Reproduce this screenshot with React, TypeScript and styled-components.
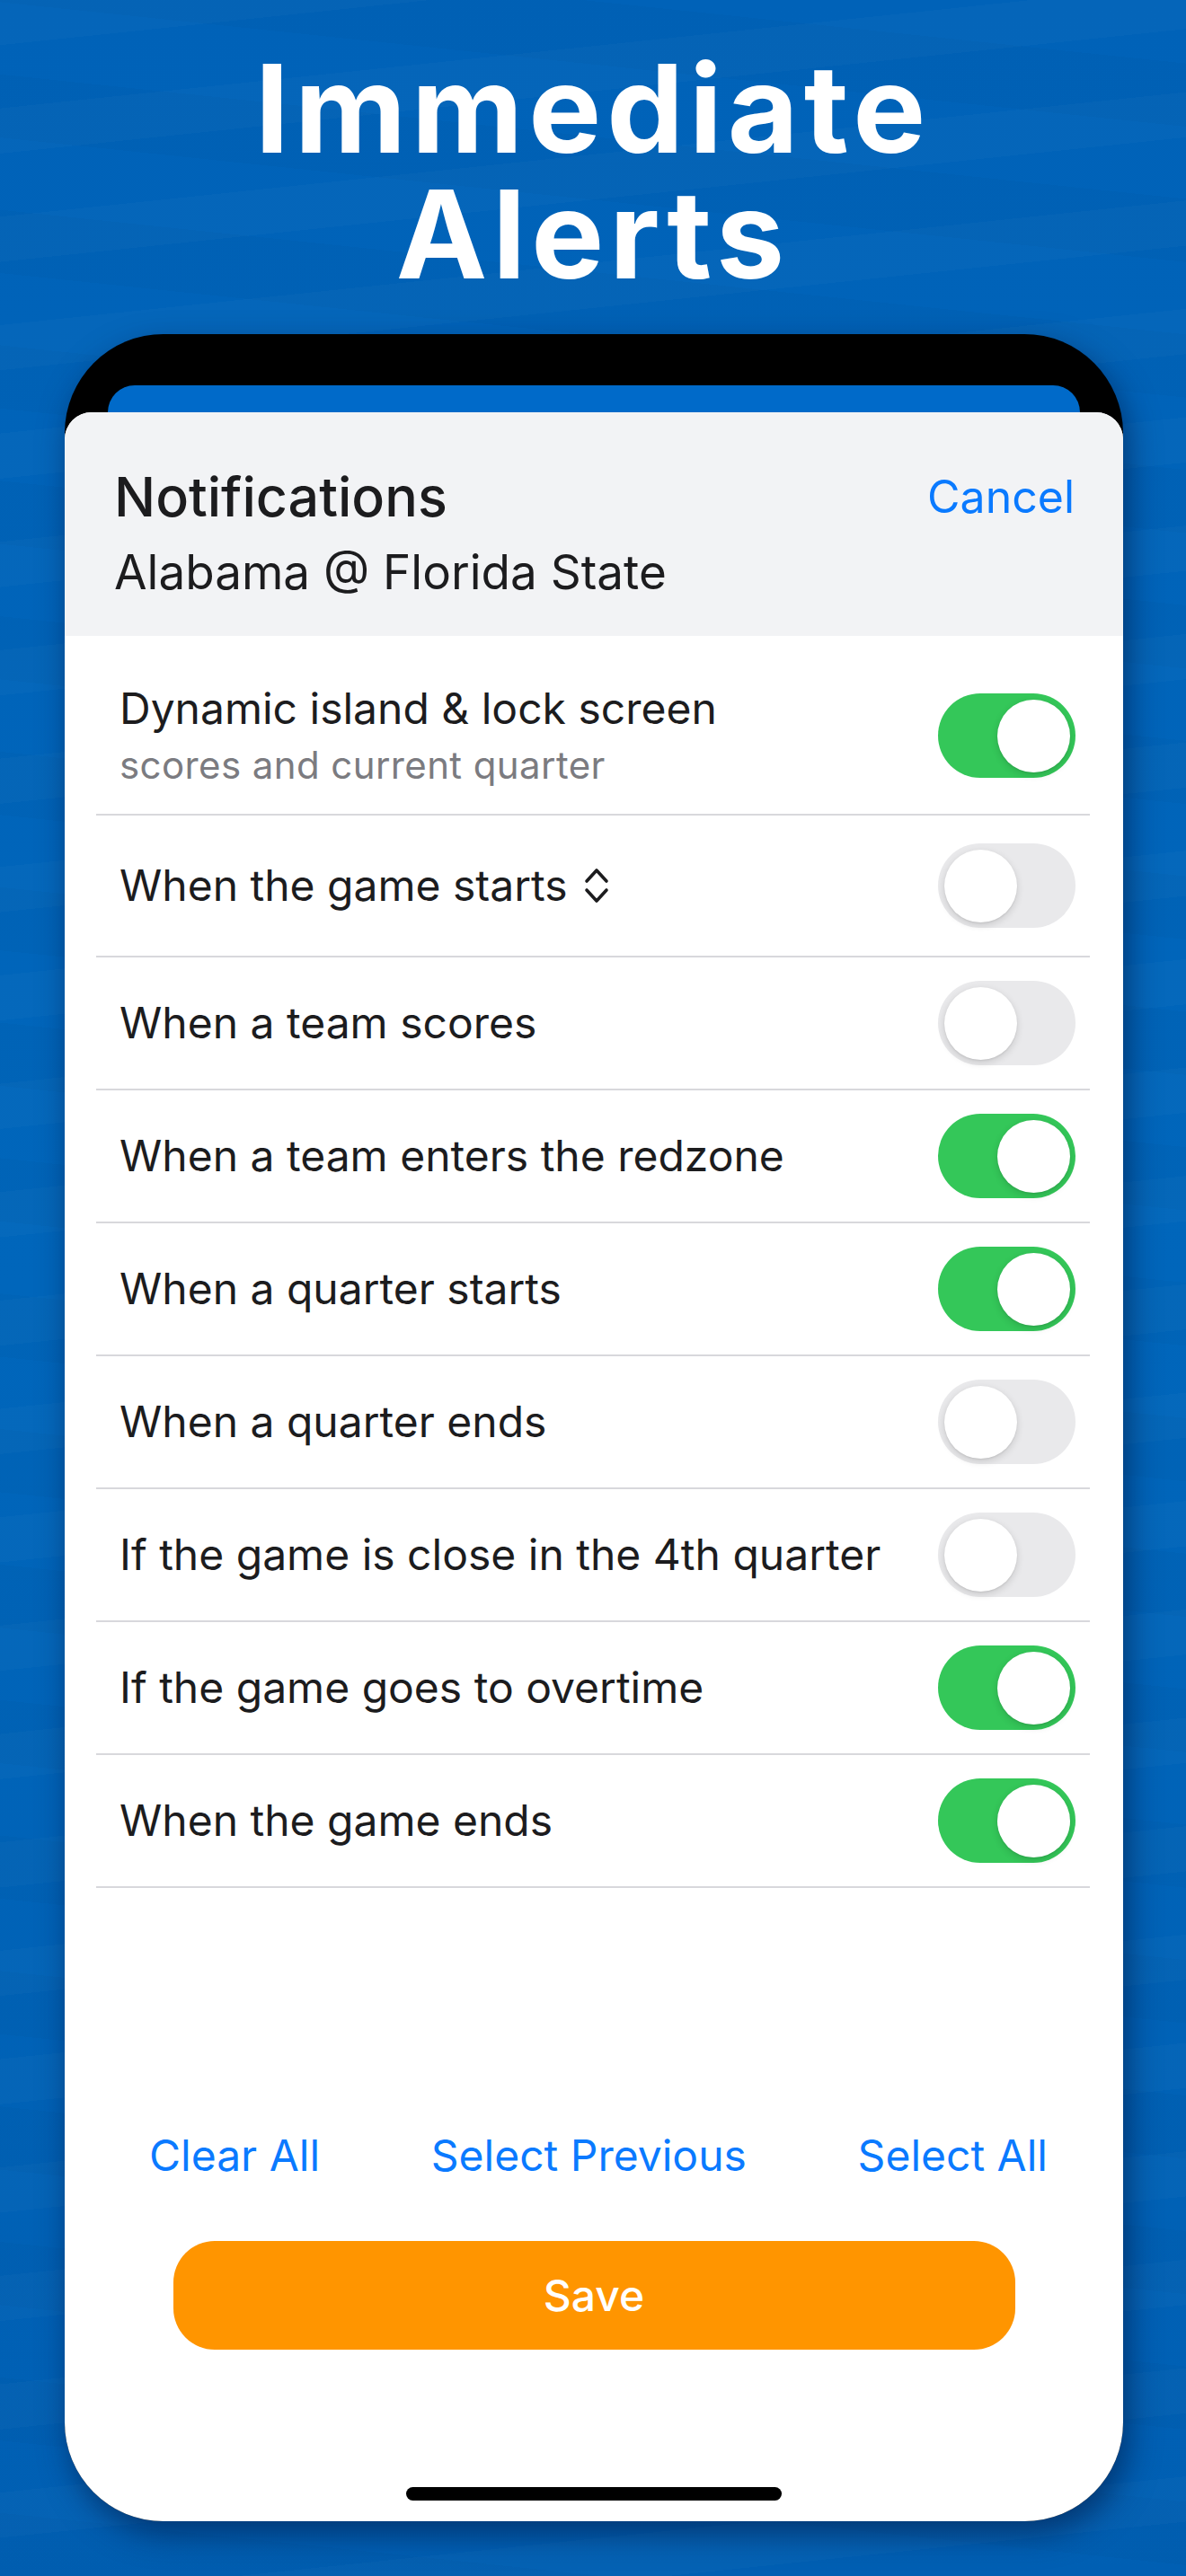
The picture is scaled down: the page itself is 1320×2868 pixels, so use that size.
import React from "react";
import styled, { createGlobalStyle } from "styled-components";

const GlobalStyle = createGlobalStyle`
  html, body { margin: 0; padding: 0; }
  body {
    width: 1320px;
    font-family: Inter, "Noto Sans", "Liberation Sans", sans-serif;
    -webkit-font-smoothing: antialiased;
  }
  * { box-sizing: border-box; }
`;

const Page = styled.div`
  width: 1320px;
  height: 2868px;
  overflow: hidden;
  background-color: #0062b6;
  background-image:
    repeating-linear-gradient(174deg, rgba(255,255,255,0.018) 0 50px, rgba(255,255,255,0) 50px 120px),
    repeating-linear-gradient(6deg, rgba(0,0,0,0.018) 0 70px, rgba(0,0,0,0) 70px 150px),
    linear-gradient(180deg, #0062b8 0%, #0066bb 50%, #005fb3 100%);
  display: flex;
  flex-direction: column;
  align-items: center;
  padding-top: 51px;
`;

const TitleLine = styled.div`
  font-family: Inter, "Liberation Sans", sans-serif;
  font-weight: 700;
  font-size: 136px;
  line-height: 140px;
  letter-spacing: 6px;
  color: #ffffff;
  text-align: center;
`;

const Phone = styled.div`
  margin-top: 41px;
  width: 1178px;
  height: 2435px;
  margin-left: 2px;
  border-radius: 110px;
  background: #000;
  overflow: hidden;
  display: flex;
  flex-direction: column;
  padding-top: 57px;
  box-shadow: 6px 14px 34px rgba(0, 20, 60, 0.55);
`;

const BehindCard = styled.div`
  height: 30px;
  margin: 0 48px;
  flex-shrink: 0;
  background: #006ac9;
  border-radius: 30px 30px 0 0;
`;

const Sheet = styled.div`
  flex: 1;
  background: #ffffff;
  border-radius: 30px 30px 0 0;
  overflow: hidden;
  display: flex;
  flex-direction: column;
`;

const Header = styled.div`
  height: 249px;
  flex-shrink: 0;
  background: #f2f3f5;
  padding: 58px 54px 0 55px;
`;

const HeaderTop = styled.div`
  display: flex;
  justify-content: space-between;
  align-items: flex-start;
`;

const SheetTitle = styled.div`
  font-size: 61px;
  line-height: 72px;
  font-weight: 500;
  color: #1c1c1e;
`;

const LinkButton = styled.button<{ $size?: number }>`
  border: 0;
  background: none;
  padding: 0;
  font-family: inherit;
  font-size: ${(p) => p.$size ?? 50}px;
  line-height: ${(p) => (p.$size ? 60 : 72)}px;
  font-weight: 400;
  color: #0a7aff;
  cursor: pointer;
`;

const GameName = styled.div`
  margin-top: 16px;
  font-size: 53px;
  line-height: 64px;
  font-weight: 400;
  color: #1c1c1e;
`;

const List = styled.div`
  padding: 24px 37px 0 35px;
`;

const Row = styled.div<{ $h: number }>`
  height: ${(p) => p.$h}px;
  display: flex;
  align-items: center;
  justify-content: space-between;
  padding: 0 16px 0 26px;
  border-bottom: 2px solid #d8d8dc;
`;

const RowText = styled.div`
  display: flex;
  flex-direction: column;
  gap: 10px;
`;

const RowLabel = styled.div`
  display: flex;
  align-items: center;
  font-size: 48px;
  line-height: 56px;
  font-weight: 400;
  color: #1c1c1e;
`;

const RowSub = styled.div`
  font-size: 42px;
  line-height: 50px;
  letter-spacing: 0.4px;
  color: #7b7b80;
`;

const Chevrons = styled.svg`
  margin-left: 18px;
  width: 28px;
  height: 42px;
`;

const Track = styled.div<{ $on: boolean }>`
  width: 153px;
  height: 94px;
  border-radius: 47px;
  flex-shrink: 0;
  padding: 6.5px;
  display: flex;
  justify-content: ${(p) => (p.$on ? "flex-end" : "flex-start")};
  background: ${(p) => (p.$on ? "#34c759" : "#e9e9eb")};
`;

const Knob = styled.div`
  width: 81px;
  height: 81px;
  border-radius: 50%;
  background: #ffffff;
  box-shadow: 0 3px 8px rgba(0, 0, 0, 0.14), 0 1px 2px rgba(0, 0, 0, 0.08);
`;

const Actions = styled.div`
  margin-top: auto;
  margin-bottom: 65px;
  display: flex;
  justify-content: space-between;
  padding: 0 84px 0 94px;
`;

const SaveButton = styled.button`
  align-self: center;
  width: 937px;
  height: 121px;
  margin-bottom: 153px;
  border: 0;
  border-radius: 46px;
  background: #ff9500;
  color: #ffffff;
  font-family: inherit;
  font-size: 48px;
  font-weight: 500;
  cursor: pointer;
`;

const HomeIndicator = styled.div`
  align-self: center;
  width: 418px;
  height: 15px;
  border-radius: 8px;
  background: #000;
  margin-bottom: 23px;
`;

const Toggle = ({ on }: { on: boolean }) => (
  <Track $on={on}>
    <Knob />
  </Track>
);

const rows: { label: string; on: boolean; h: number; chevron?: boolean }[] = [
  { label: "When the game starts", on: false, h: 158, chevron: true },
  { label: "When a team scores", on: false, h: 148 },
  { label: "When a team enters the redzone", on: true, h: 148 },
  { label: "When a quarter starts", on: true, h: 148 },
  { label: "When a quarter ends", on: false, h: 148 },
  { label: "If the game is close in the 4th quarter", on: false, h: 148 },
  { label: "If the game goes to overtime", on: true, h: 148 },
  { label: "When the game ends", on: true, h: 148 },
];

export default function App() {
  return (
    <>
      <GlobalStyle />
      <Page>
        <TitleLine>Immediate</TitleLine>
        <TitleLine>Alerts</TitleLine>
        <Phone>
          <BehindCard />
          <Sheet>
            <Header>
              <HeaderTop>
                <SheetTitle>Notifications</SheetTitle>
                <LinkButton>Cancel</LinkButton>
              </HeaderTop>
              <GameName>Alabama @ Florida State</GameName>
            </Header>
            <List>
              <Row $h={176}>
                <RowText>
                  <RowLabel>Dynamic island &amp; lock screen</RowLabel>
                  <RowSub>scores and current quarter</RowSub>
                </RowText>
                <Toggle on={true} />
              </Row>
              {rows.map((r) => (
                <Row key={r.label} $h={r.h}>
                  <RowLabel>
                    {r.label}
                    {r.chevron && (
                      <Chevrons viewBox="0 0 28 42" fill="none">
                        <path
                          d="M3 16 L14 4 L25 16 M3 26 L14 38 L25 26"
                          stroke="#1c1c1e"
                          strokeWidth="3.6"
                          strokeLinecap="round"
                          strokeLinejoin="round"
                        />
                      </Chevrons>
                    )}
                  </RowLabel>
                  <Toggle on={r.on} />
                </Row>
              ))}
            </List>
            <Actions>
              <LinkButton $size={48}>Clear All</LinkButton>
              <LinkButton $size={48}>Select Previous</LinkButton>
              <LinkButton $size={48}>Select All</LinkButton>
            </Actions>
            <SaveButton>Save</SaveButton>
            <HomeIndicator />
          </Sheet>
        </Phone>
      </Page>
    </>
  );
}
